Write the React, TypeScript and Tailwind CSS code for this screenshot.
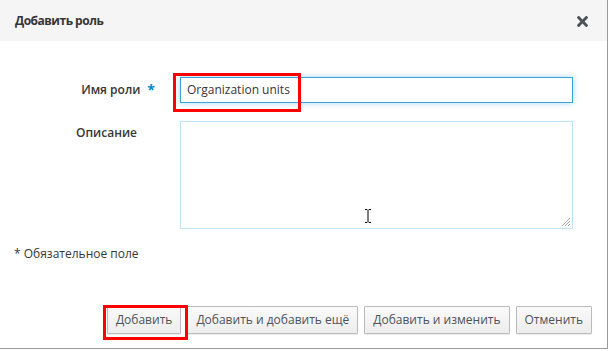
import React from "react";

function Btn({ children }: { children: React.ReactNode }) {
  return (
    <button className="h-[28px] px-[8px] border border-[#bbbbbb] rounded-[1px] bg-gradient-to-b from-[#fafafa] to-[#ededed] text-[12px] text-[#4d5258] leading-none shadow-[0_1px_1px_rgba(3,3,3,0.08)]">
      {children}
    </button>
  );
}

export default function App() {
  return (
    <div className="w-[609px] h-[351px] bg-white relative" style={{ fontFamily: '"Open Sans", "Liberation Sans", sans-serif' }}>
      <div className="w-[608px] h-[349px] border-r border-b border-[#9a9a9a] flex flex-col text-[#363636]">
        <div className="h-[41px] bg-[#f5f5f5] flex items-center justify-between pl-[15px] pr-[19px] shrink-0">
          <span className="text-[12px] font-bold tracking-[-0.5px] text-[#363636]">Добавить роль</span>
          <svg width="11" height="11" viewBox="0 0 352 352" className="mt-[1px]">
            <path
              fill="#4d5258"
              d="M242.72 176L342.79 75.930c12.28-12.28 12.28-32.19 0-44.48L320.55 9.21c-12.28-12.28-32.19-12.28-44.48 0L176 109.28 75.93 9.21c-12.28-12.28-32.19-12.28-44.48 0L9.21 31.45c-12.28 12.28-12.28 32.19 0 44.48L109.28 176 9.21 276.07c-12.28 12.28-12.28 32.19 0 44.48l22.24 22.24c12.28 12.28 32.2 12.28 44.48 0L176 242.72l100.07 100.07c12.28 12.28 32.2 12.28 44.480 0l22.24-22.24c12.28-12.28 12.28-32.19 0-44.48L242.72 176z"
            />
          </svg>
        </div>
        <div className="flex-1 flex flex-col relative">
          <div className="flex items-center mt-[36px]">
            <div className="w-[155px] flex justify-end items-center text-[12px] font-semibold text-[#363636]">
              <span>Имя роли</span>
              <span className="text-[#0088ce] ml-[7px] text-[14px] font-bold leading-none">*</span>
            </div>
            <div className="ml-[25px] w-[393px] h-[26px] border border-[#39a5dc] shadow-[0_0_6px_rgba(57,165,220,0.45)] flex items-center pl-[6px] text-[12px] text-[#363636]">
              Organization units
            </div>
          </div>
          <div className="flex items-start mt-[18px]">
            <div className="w-[155px] pr-[18px] flex justify-end text-[12px] font-semibold text-[#363636] pt-[3px]">
              Описание
            </div>
            <div className="ml-[25px] w-[393px] h-[108px] border border-[#bee1f4] relative">
              <svg width="10" height="10" viewBox="0 0 10 10" className="absolute right-[1px] bottom-[1px]">
                <path d="M9 1L1 9M9 4L4 9M9 7L7 9" stroke="#a0a0a0" strokeWidth="1" />
              </svg>
            </div>
          </div>
          <div className="mt-[16px] pl-[14px] text-[12px] text-[#363636]">* Обязательное поле</div>
          <div className="mt-auto mb-[14px] flex justify-end gap-[6px] pr-[15px]">
            <Btn>Добавить</Btn>
            <Btn>Добавить и добавить ещё</Btn>
            <Btn>Добавить и изменить</Btn>
            <Btn>Отменить</Btn>
          </div>
          <svg width="8" height="16" viewBox="0 0 8 16" className="absolute left-[364px] top-[167px]">
            <path d="M1 1.5h2l1 1 1-1h2M4 2.5v11M1 14.5h2l1-1 1 1h2" stroke="#000" strokeWidth="1" fill="none" />
          </svg>
        </div>
      </div>
      <div className="absolute left-[173px] top-[73px] w-[128px] h-[39px] border-[3px] border-[#ff0000]" />
      <div className="absolute left-[103px] top-[305px] w-[85px] h-[35px] border-[3px] border-[#ff0000]" />
    </div>
  );
}
